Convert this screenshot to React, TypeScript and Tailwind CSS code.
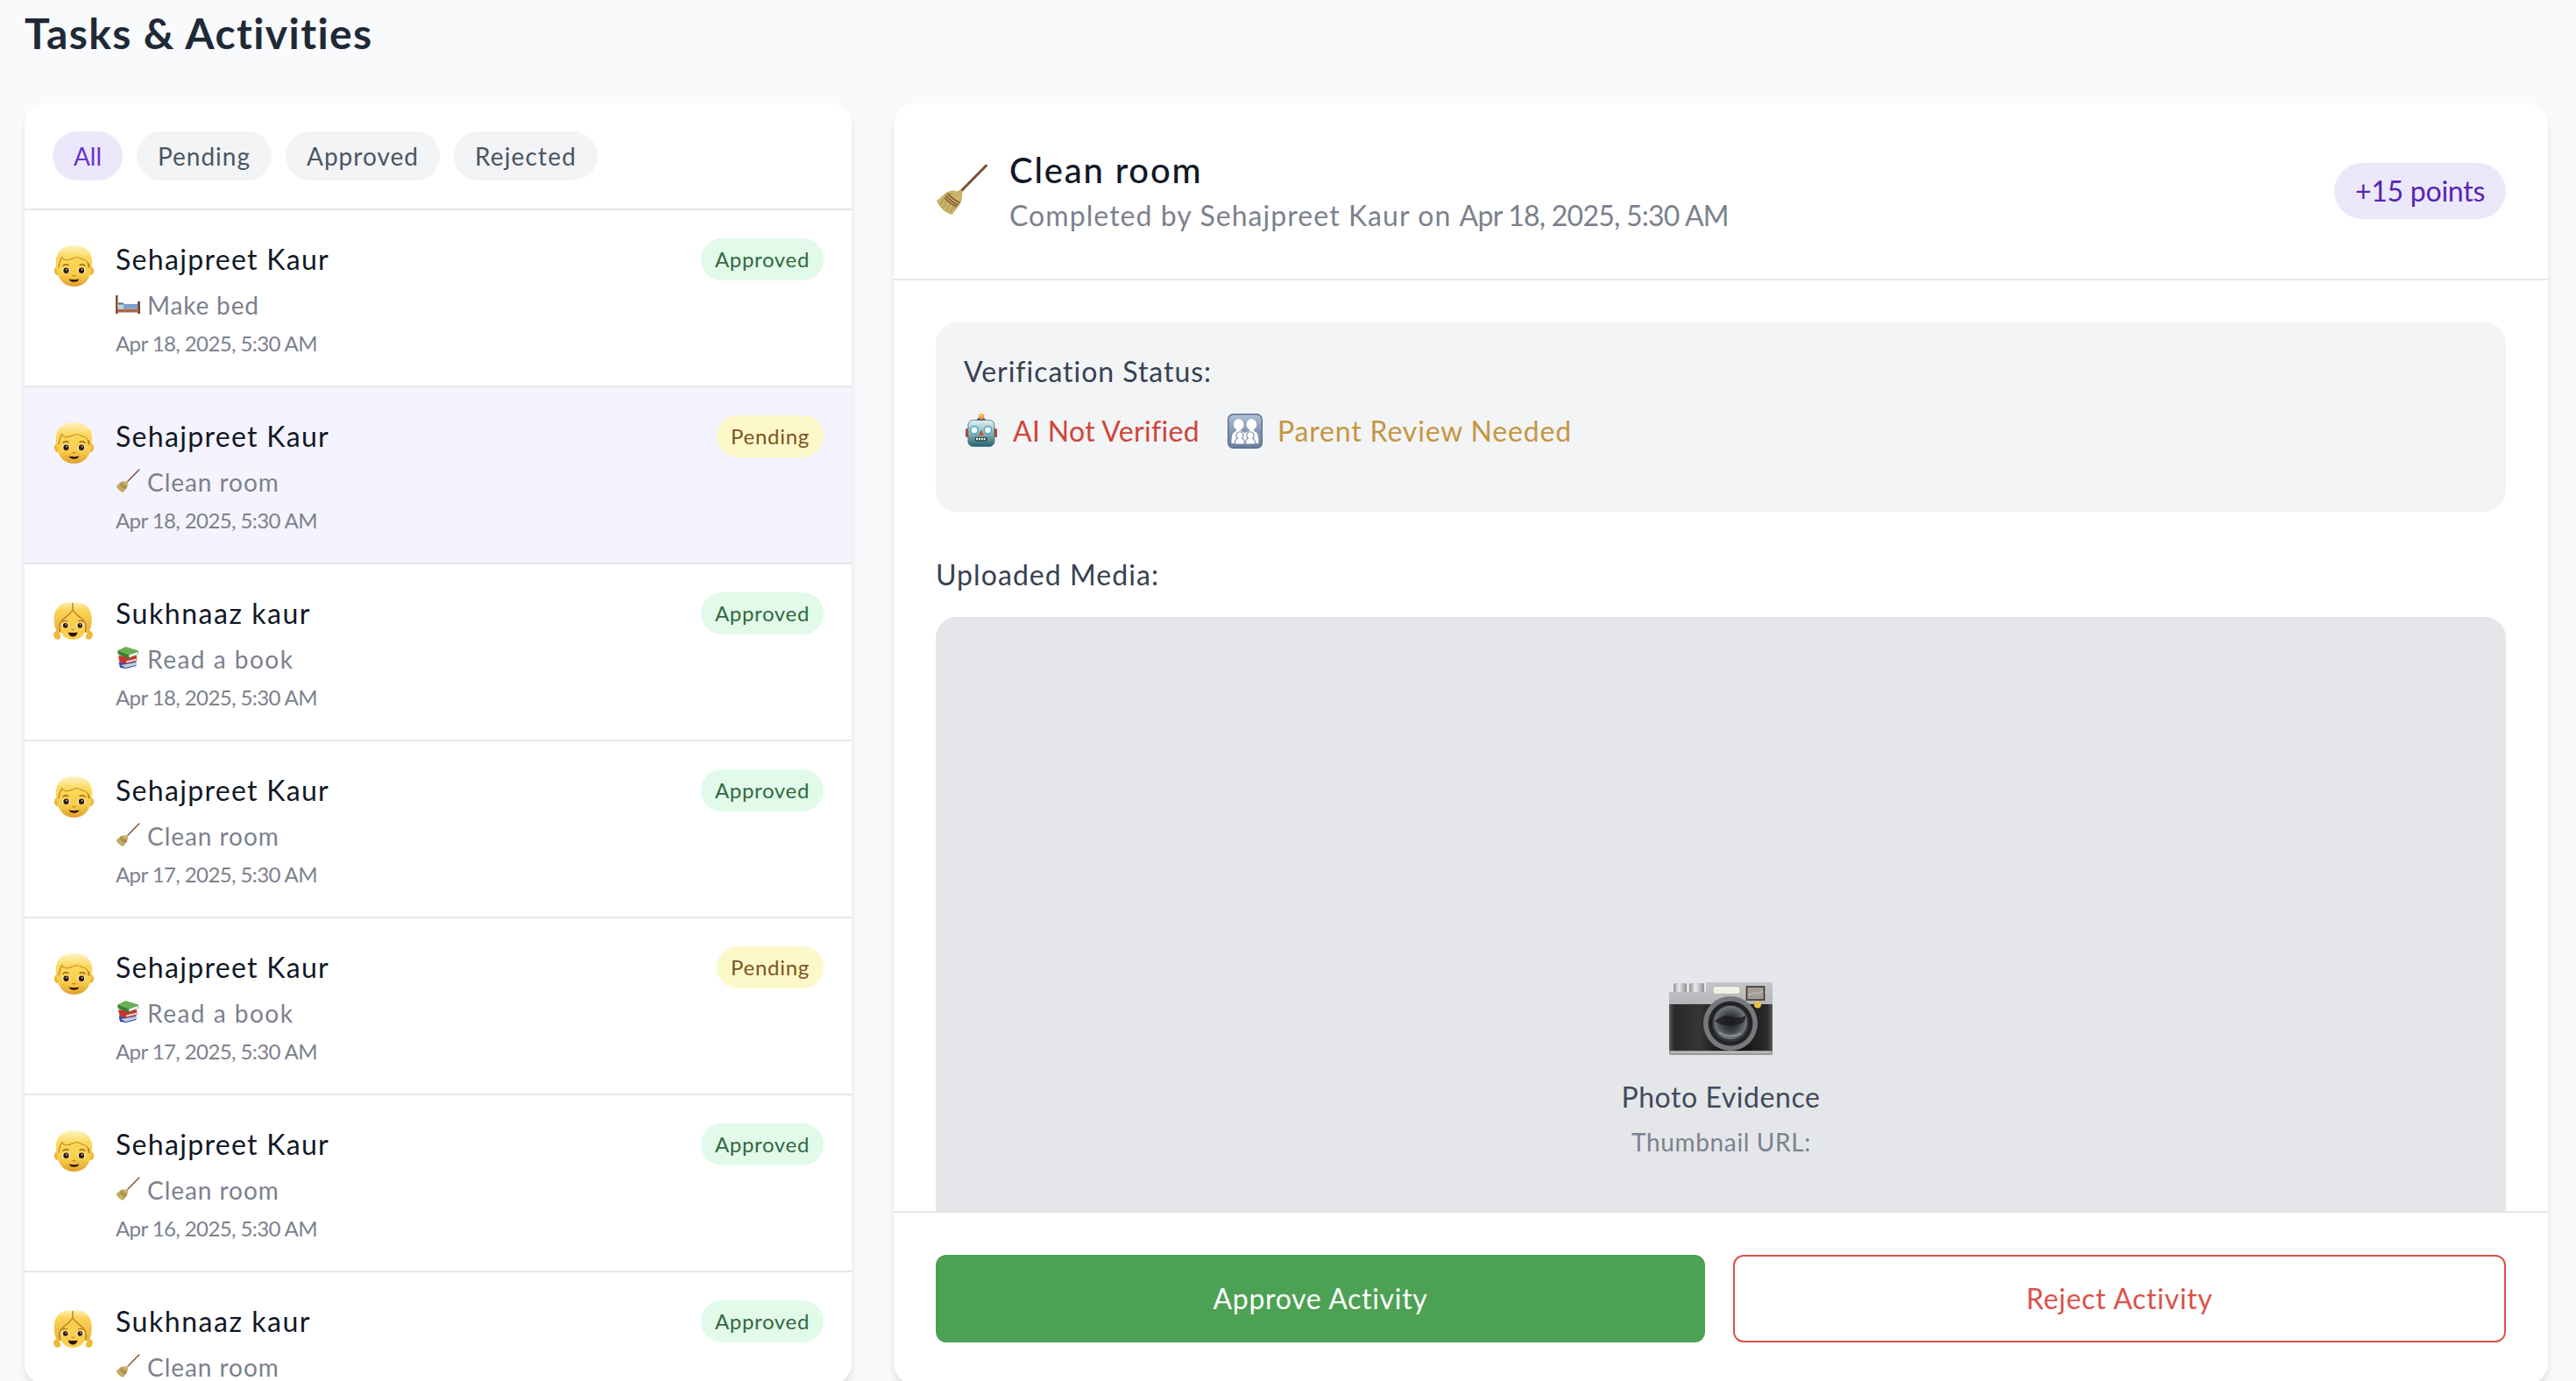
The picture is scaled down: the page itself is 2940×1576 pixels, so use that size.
import type { ReactNode } from "react";

type IconProps = { className?: string };

const Boy = ({ className }: IconProps) => (
  <svg className={className} viewBox="0 0 45 47">
    <defs>
      <linearGradient id="bf" x1="0" y1="0" x2="0" y2="1">
        <stop offset="0" stopColor="#fff3c4" />
        <stop offset=".3" stopColor="#fbd95c" />
        <stop offset=".7" stopColor="#f8cd4b" />
        <stop offset="1" stopColor="#dfa02b" />
      </linearGradient>
    </defs>
    <ellipse cx="3.4" cy="29" rx="3.4" ry="5" fill="#eeb437" />
    <ellipse cx="41.6" cy="29" rx="3.4" ry="5" fill="#eeb437" />
    <path d="M22.5 0C9 0 1.8 7 1.8 19c0 4 .6 6.500 1.200 10C5 40 12 47 22.500 47S40 40 42 29c.6-3.500 1.200-6 1.200-10C43.200 7 36 0 22.500 0Z" fill="url(#bf)" />
    <path d="M8.500 12.500c.5 3 3 4.500 6.500 4.200 5-.4 7-3.200 11.500-3 3 .2 4 2.600 7.500 2.800 3.500.2 4.500 3 5 9" fill="none" stroke="#c98c26" strokeWidth="1.100" />
    <path d="M8.500 14c-2 3-2.800 7-3.700 11.500M39 20l1.500 6" fill="none" stroke="#b87a22" strokeWidth="1.200" />
    <path d="M9.500 23.500q3.500-3 7-.8M28.500 22.700q3.500-2.200 7 .8" fill="none" stroke="#9c6415" strokeWidth="1.300" />
    {[13.5, 31].map((x) => (
      <g key={x}>
        <ellipse cx={x} cy="28.800" rx="4.300" ry="3.300" fill="#fff" />
        <circle cx={x} cy="28.800" r="3.200" fill="#33190a" />
        <circle cx={x + 0.6} cy="27.800" r=".8" fill="#fff" />
      </g>
    ))}
    <path d="M20.500 34q2 1.800 4 0" fill="none" stroke="#c58422" strokeWidth="1.300" />
    <path d="M16.700 38.600q5.800 1.400 11.600 0-1.400 3.200-5.800 3.200t-5.800-3.200Z" fill="#2b1206" />
  </svg>
);

const Girl = ({ className }: IconProps) => (
  <svg className={className} viewBox="0 0 46 43">
    <defs>
      <linearGradient id="gf" x1="0" y1="0" x2="0" y2="1">
        <stop offset="0" stopColor="#fff0b8" />
        <stop offset=".25" stopColor="#fbd55a" />
        <stop offset="1" stopColor="#eab13a" />
      </linearGradient>
    </defs>
    <path d="M5 32c-4 1-6 5-4.500 7 .5 3 3 4.500 5 3.500 1.500.6 3-1.500 2.500-4zM40 32c4 1 6 5 4.500 7-.5 3-3 4.500-5 3.500-1.500.6-3-1.500-2.500-4z" fill="#f0b93a" />
    <path d="M22 1C17-1 2 0 .8 18 .5 26 2 33 6 35h33c3.500-2 5-9 4.700-17C42.500 0 27-1 22 1Z" fill="url(#gf)" />
    <path d="M22 9C16 18 8 20 7.500 27 7 37 14 43 22.300 43S37.500 37 37 27C36.500 20 28 18 22 9Z" fill="#f9cf4e" />
    <path d="M22 1v8C16 18 8 19 7 26c-.2 3 0 5 .6 8M22 9c6 9 14 10 15 17 .2 3 0 5-.6 8" fill="none" stroke="#b47a20" strokeWidth="1.300" />
    <path d="M10 22.500q3-2.500 6-.5M28 22q3-2 6 .5" fill="none" stroke="#9c6415" strokeWidth="1" />
    {[13.7, 30.3].map((x) => (
      <g key={x}>
        <ellipse cx={x} cy="26.800" rx="4" ry="3" fill="#fff" />
        <circle cx={x} cy="26.800" r="2.900" fill="#33190a" />
        <circle cx={x + 0.6} cy="25.900" r=".7" fill="#fff" />
      </g>
    ))}
    <path d="M20.500 31q1.500 1.300 3 0" fill="none" stroke="#c58422" strokeWidth="1.100" />
    <path d="M16.800 34.500q5.400 1 10.800 0Q26.500 39.500 22.200 39.500T16.800 34.500Z" fill="#2b1206" />
  </svg>
);

const Broom = ({ className }: IconProps) => (
  <svg className={className} viewBox="0 0 58 58">
    <path d="M56.500 2 28 31" stroke="#7b4d31" strokeWidth="3" strokeLinecap="round" />
    <path d="M23.500 31.500q3-3.500 6 0L29 36c1 5-3 12-11.500 22C10 56 3 50 0 42c3-2 6-5 10-8.500 4-3 9-4 13.500-2Z" fill="#c8b46a" />
    <path d="M8 40 4 47M11 43 7 51M15 46l-4 8M19 49l-4 7M17 33l-3 4" stroke="#a38e4a" strokeWidth="1" />
    <path d="M12.500 33.500q6 7.500 14.500 11M10.500 36q6 7.500 14.500 11M9 38.500q6 7 14 10.500" fill="none" stroke="#85532f" strokeWidth="1.400" />
  </svg>
);

const Books = ({ className }: IconProps) => (
  <svg className={className} viewBox="0 0 24 25">
    <path d="M1.500 18 3 24l7 .9L21.500 22l-.3-5z" fill="#3452ae" />
    <path d="m4 21 17-3 .3 3-12 3z" fill="#c9cbdc" />
    <path d="M1 10.500 2.500 18l8 1.300 12-3-.5-6z" fill="#c8352d" />
    <path d="m10 16.500 12-3v2l-11.500 3z" fill="#e6dcd8" />
    <path d="m0 5 1 4 12 4.500L24 8.500 24 5z" fill="#3d7e35" />
    <path d="m13 9.500 10.500-4v3L13.500 12.500z" fill="#f2f1ea" />
    <path d="M0 4.500 9.500 0 24 4.500 13 9.500z" fill="#68b053" />
  </svg>
);

const Bed = ({ className }: IconProps) => (
  <svg className={className} viewBox="0 0 28 21">
    <path d="M0 0h2.500v21H0zM25 7h3v14h-3z" fill="#7d4a34" />
    <path d="M2 15.500h24v4H2z" fill="#a7694a" />
    <path d="M2.500 10H10v5.500H2.500z" fill="#c2d4e2" />
    <path d="M3 8.500h6l.5 2H3z" fill="#5f6f7d" />
    <path d="M9 10h16v5.500H9z" fill="#7ba0cd" />
  </svg>
);

const Robot = ({ className }: IconProps) => (
  <svg className={className} viewBox="0 0 36 38">
    <defs>
      <linearGradient id="rh" x1="0" y1="0" x2="0" y2="1">
        <stop offset="0" stopColor="#e3f3ef" />
        <stop offset=".5" stopColor="#8fb7b8" />
        <stop offset="1" stopColor="#23606f" />
      </linearGradient>
    </defs>
    <rect y="17" width="5" height="10" rx="1.500" fill="#b8443a" />
    <rect x="31" y="17" width="5" height="10" rx="1.500" fill="#b8443a" />
    <rect x="13" y="5" width="9.500" height="4.500" rx="2" fill="#574886" />
    <circle cx="18" cy="3.200" r="3.100" fill="#f2a233" />
    <circle cx="17.500" cy="2.200" r="1.200" fill="#ffe07a" />
    <rect x="2.900" y="7.400" width="30" height="30" rx="5.500" fill="url(#rh)" stroke="#3a6d78" strokeWidth=".8" />
    {[10, 25.5].map((x) => (
      <g key={x}>
        <circle cx={x} cy="18.700" r="4.200" fill="#eafaff" stroke="#4aa3cc" strokeWidth="1.400" />
        <circle cx={x} cy="18.700" r="1.800" fill="#fff" />
      </g>
    ))}
    <path d="m17.800 18.500 3 6.300h-6z" fill="#c9483d" />
    <rect x="11" y="26.800" width="13.500" height="4.600" rx="1" fill="#253b42" />
    <path d="M12 29h11.500" stroke="#f1f4f2" strokeWidth="2.600" strokeDasharray="2 .9" />
  </svg>
);

const Family = ({ className }: IconProps) => (
  <svg className={className} viewBox="0 0 40 40">
    <defs>
      <linearGradient id="fb" x1="0" y1="0" x2="0" y2="1">
        <stop offset="0" stopColor="#b3c2d6" />
        <stop offset=".5" stopColor="#8498b5" />
        <stop offset="1" stopColor="#667d9b" />
      </linearGradient>
    </defs>
    <rect x=".7" y=".7" width="38.600" height="38.600" rx="6" fill="url(#fb)" stroke="#5b7391" strokeWidth="1.400" />
    <g fill="#fff">
      <ellipse cx="12.700" cy="12.500" rx="5.800" ry="6.500" />
      <ellipse cx="27.300" cy="12.500" rx="5.800" ry="6.500" />
      <path d="M10 17v3c-4 1-5.500 4-5.500 14h31c0-10-1.500-13-5.500-14v-3h-5v3l-5 2-5-2v-3z" />
    </g>
    <path d="M8.500 34.500c0-4 1-5.500 3-6.200a4.200 4.200 0 1 1 5 0c2 .7 3 2.200 3 6.200M20.500 34.500c0-4 1-5.500 3-6.200a4.200 4.200 0 1 1 5 0c2 .7 3 2.200 3 6.200" fill="#fff" stroke="#7f94b0" strokeWidth="1.200" />
  </svg>
);

const Camera = ({ className }: IconProps) => (
  <svg className={className} viewBox="0 0 118 83">
    <defs>
      <linearGradient id="cs" x1="0" y1="0" x2="0" y2="1">
        <stop offset="0" stopColor="#c5c6c8" />
        <stop offset="1" stopColor="#b4b5b8" />
      </linearGradient>
      <linearGradient id="cb" x1="0" y1="0" x2="1" y2="0">
        <stop offset="0" stopColor="#5a5a5a" />
        <stop offset=".05" stopColor="#2a2a2b" />
        <stop offset=".3" stopColor="#353536" />
        <stop offset=".6" stopColor="#080808" />
        <stop offset=".95" stopColor="#2c2c2d" />
        <stop offset="1" stopColor="#5a5a5a" />
      </linearGradient>
      <linearGradient id="cd" x1="0" y1="0" x2="1" y2="0">
        <stop offset="0" stopColor="#8f9093" />
        <stop offset=".4" stopColor="#ebebec" />
        <stop offset="1" stopColor="#8f9093" />
      </linearGradient>
      <radialGradient id="cg" cx=".5" cy=".5" r=".5">
        <stop offset="0" stopColor="#202022" />
        <stop offset=".5" stopColor="#3c4043" />
        <stop offset="1" stopColor="#75797d" />
      </radialGradient>
    </defs>
    <rect x="5" y="1" width="15" height="11" rx="1.500" fill="url(#cd)" />
    <rect x="23" y="1" width="17" height="11" rx="1.500" fill="url(#cd)" />
    <path d="M0 12q0-1 1-1h41V1q0-1 1-1h73q2 0 2 2v24H0z" fill="url(#cs)" />
    <rect y="25" width="118" height="54" fill="url(#cb)" />
    <path d="M0 78h118v3.500q0 1.500-1.500 1.500h-115Q0 83 0 81.500z" fill="#999a9b" />
    <path d="M2 80h114" stroke="#d4d5d5" />
    <rect x="50" y="4.500" width="31" height="9" rx="3" fill="#f1efe7" stroke="#a9a9a4" strokeWidth=".8" />
    <rect x="88.500" y="5" width="20" height="15" fill="#a39c95" stroke="#393634" strokeWidth="1.600" />
    <path d="m90 15 6-3 5 1 6-3" stroke="#b8b2aa" strokeWidth="2" fill="none" />
    <circle cx="70" cy="47" r="31" fill="#77797d" />
    <circle cx="70" cy="47" r="25.500" fill="#252629" />
    <circle cx="70" cy="47" r="22" fill="#36383b" stroke="#141517" />
    <circle cx="70" cy="46" r="19" fill="url(#cg)" />
    <path d="M52 44q10-8 20-5t15-1q1 8-7 10t-16 1-12-5Z" fill="#1b1c1f" opacity=".8" />
    <path d="M57 57q12 8 25 1" stroke="#a1a7ad" strokeWidth="2" fill="none" opacity=".6" />
    <circle cx="101" cy="25.500" r="4" fill="#e9c04a" />
  </svg>
);

const CHILDREN = {
  sehajpreet: {
    name: "Sehajpreet Kaur",
    tracking: "tracking-[1.31px]",
    avatar: <Boy className="mt-2 ml-0.5 h-[47px] w-[45px]" />,
  },
  sukhnaaz: {
    name: "Sukhnaaz kaur",
    tracking: "tracking-[1.54px]",
    avatar: <Girl className="mt-[11px] ml-px h-[43px] w-[46px]" />,
  },
};

const TASKS = {
  bed: { label: "Make bed", tracking: "tracking-[0.85px]", icon: <Bed className="mt-[9px] h-[21px] w-7" /> },
  room: { label: "Clean room", tracking: "tracking-[0.95px]", icon: <Broom className="mt-[5px] h-[27px] w-7" /> },
  book: { label: "Read a book", tracking: "tracking-[1.5px]", icon: <Books className="mt-1.5 ml-0.5 h-[25px] w-6" /> },
};

type Activity = {
  child: keyof typeof CHILDREN;
  task: keyof typeof TASKS;
  date: string;
  status: "Approved" | "Pending";
  selected?: boolean;
};

const ACTIVITIES: Activity[] = [
  { child: "sehajpreet", task: "bed", date: "Apr 18, 2025, 5:30 AM", status: "Approved" },
  { child: "sehajpreet", task: "room", date: "Apr 18, 2025, 5:30 AM", status: "Pending", selected: true },
  { child: "sukhnaaz", task: "book", date: "Apr 18, 2025, 5:30 AM", status: "Approved" },
  { child: "sehajpreet", task: "room", date: "Apr 17, 2025, 5:30 AM", status: "Approved" },
  { child: "sehajpreet", task: "book", date: "Apr 17, 2025, 5:30 AM", status: "Pending" },
  { child: "sehajpreet", task: "room", date: "Apr 16, 2025, 5:30 AM", status: "Approved" },
  { child: "sukhnaaz", task: "room", date: "Apr 16, 2025, 5:30 AM", status: "Approved" },
];

const TABS = [
  { label: "All", style: "w-20 bg-[#ece8fc] text-[#6931d1]" },
  { label: "Pending", style: "w-[154px] bg-[#f3f4f6] text-[#4b5563] tracking-[0.99px]" },
  { label: "Approved", style: "w-44 bg-[#f3f4f6] text-[#4b5563] tracking-[1.01px]" },
  { label: "Rejected", style: "w-[164px] bg-[#f3f4f6] text-[#4b5563] tracking-[1.16px]" },
];

function StatusBadge({ status }: { status: Activity["status"] }) {
  return (
    <span
      className={
        "flex h-12 items-center justify-center rounded-full text-2xl " +
        (status === "Approved"
          ? "w-[140px] bg-[#e1fae9] tracking-[0.65px] text-[#33683f]"
          : "w-[122px] bg-[#fdf8c9] tracking-[0.73px] text-[#7e5220]")
      }
    >
      {status}
    </span>
  );
}

function ActivityRow({ activity }: { activity: Activity }) {
  const child = CHILDREN[activity.child];
  const task = TASKS[activity.task];
  return (
    <li
      className={
        "flex h-[202px] shrink-0 items-start border-b-2 border-[#e5e6ea] px-8 pt-8 " +
        (activity.selected ? "bg-[#f5f3fe]" : "bg-white")
      }
    >
      <div className="w-[72px] shrink-0">{child.avatar}</div>
      <div className="flex-1 whitespace-nowrap">
        <div className={"text-[32px] leading-[48px] text-[#111827] " + child.tracking}>{child.name}</div>
        <div className="mt-2 flex h-10 items-start gap-2">
          <span className="w-7 shrink-0">{task.icon}</span>
          <span className={"text-[28px] leading-10 text-[#7b818d] " + task.tracking}>{task.label}</span>
        </div>
        <div className="mt-2 text-2xl leading-8 tracking-[-0.59px] text-[#7b818d]">{activity.date}</div>
      </div>
      <StatusBadge status={activity.status} />
    </li>
  );
}

function Card({ className, children }: { className: string; children: ReactNode }) {
  return (
    <section
      className={
        "flex h-[1462px] shrink-0 flex-col overflow-hidden rounded-3xl bg-white shadow-[0_8px_12px_-2px_rgba(0,0,0,0.1),0_4px_8px_-4px_rgba(0,0,0,0.1)] " +
        className
      }
    >
      {children}
    </section>
  );
}

export default function App() {
  return (
    <div className="h-[1576px] w-[2940px] overflow-hidden bg-[#f9fafc] px-7 pt-1.5 font-['Lato',sans-serif] [font-variant-ligatures:none]">
      <h1 className="text-5xl leading-[64px] font-bold tracking-[1.4px] text-[#1f2937]">Tasks &amp; Activities</h1>
      <main className="mt-12 flex gap-12">
        <Card className="w-[944px]">
          <nav className="flex h-[122px] shrink-0 gap-4 border-b-2 border-[#e5e6ea] p-8">
            {TABS.map((tab) => (
              <button key={tab.label} className={"h-14 rounded-full text-[28px] leading-10 " + tab.style}>
                {tab.label}
              </button>
            ))}
          </nav>
          <ul className="flex min-h-0 flex-1 flex-col overflow-hidden">
            {ACTIVITIES.map((activity, i) => (
              <ActivityRow key={i} activity={activity} />
            ))}
          </ul>
        </Card>

        <Card className="w-[1888px]">
          <header className="flex h-[202px] shrink-0 items-center border-b-2 border-[#e5e6ea] px-12">
            <Broom className="mr-[25px] mb-1 ml-px h-[58px] w-[58px]" />
            <div className="flex-1 whitespace-nowrap">
              <h2 className="text-[40px] leading-[56px] font-medium tracking-[1.8px] text-[#111827]">Clean room</h2>
              <p className="text-[32px] leading-[48px] tracking-[1.06px] text-[#7b818d]">
                Completed by Sehajpreet Kaur on <span className="tracking-[-0.76px]">Apr 18, 2025, 5:30 AM</span>
              </p>
            </div>
            <span className="flex h-16 w-[196px] items-center justify-center rounded-full bg-[#ece8fc] text-[32px] tracking-[-0.26px] text-[#5626ae]">
              +15 points
            </span>
          </header>

          <div className="min-h-0 flex-1 overflow-hidden px-12 pt-12">
            <div className="h-[216px] rounded-3xl bg-[#f3f4f6] p-8 whitespace-nowrap">
              <h3 className="text-[32px] leading-[48px] tracking-[0.97px] text-[#374151]">Verification Status:</h3>
              <div className="mt-5 flex h-12 items-center text-[32px] leading-[48px]">
                <div className="flex w-[300px] items-center">
                  <Robot className="mr-[18px] mb-0.5 ml-0.5 h-[38px] w-9" />
                  <span className="tracking-[0.31px] text-[#cf453c]">AI Not Verified</span>
                </div>
                <div className="flex items-center">
                  <Family className="mr-[17px] ml-px h-10 w-10" />
                  <span className="tracking-[0.83px] text-[#c6963f]">Parent Review Needed</span>
                </div>
              </div>
            </div>
            <h3 className="mt-12 text-[32px] leading-[48px] tracking-[1.06px] text-[#374151]">Uploaded Media:</h3>
            <div className="mt-6 flex h-[1008px] flex-col items-center rounded-3xl bg-[#e5e6ea] pt-[417px]">
              <Camera className="h-[83px] w-[118px]" />
              <p className="mt-6 text-[32px] leading-[48px] tracking-[0.57px] text-[#414a59]">Photo Evidence</p>
              <p className="mt-[7px] ml-px text-[28px] leading-10 tracking-[0.66px] text-[#7b818d]">Thumbnail URL:</p>
            </div>
          </div>

          <footer className="flex shrink-0 gap-8 border-t-2 border-[#e5e6ea] p-12">
            <button className="h-[100px] w-[878px] rounded-xl bg-[#4da154] text-[32px] tracking-[0.68px] text-white">
              Approve Activity
            </button>
            <button className="h-[100px] flex-1 rounded-xl border-2 border-[#da524a] text-[32px] tracking-[0.72px] text-[#da524a]">
              Reject Activity
            </button>
          </footer>
        </Card>
      </main>
    </div>
  );
}
